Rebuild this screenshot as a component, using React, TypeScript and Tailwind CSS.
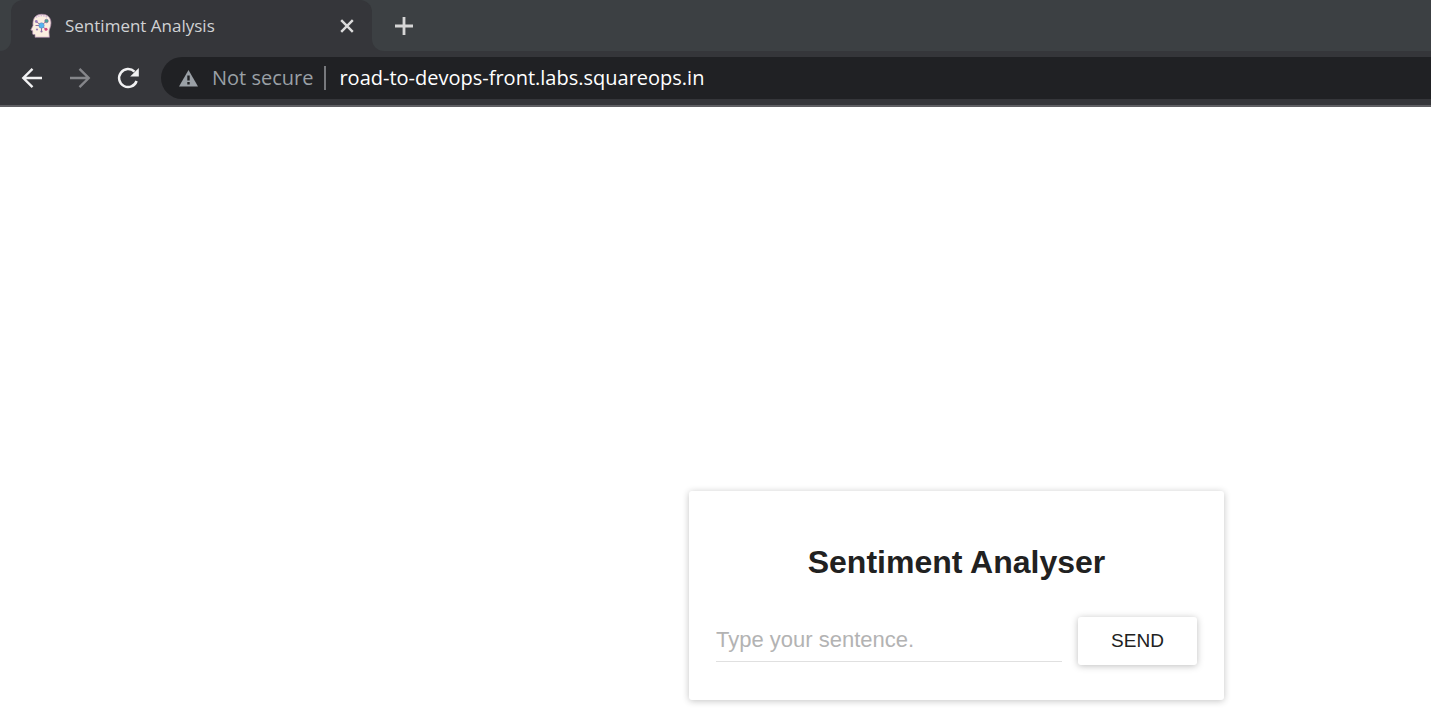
import type { ReactNode } from "react";

function HeadIcon() {
  return (
    <svg width="24" height="26" viewBox="0 0 24 26" aria-hidden="true" className="shrink-0">
      <path
        d="M6 24.3V21.500H4.500C3.800 21.500 3.600 21 3.600 20.500v-2.700l-1.800-.8 2.200-4.500C3.400 6 6 1.800 12 1.300 18.500 1 22 4.500 22 10c0 4-2 6-2 9l.4 5.300z"
        fill="#fbefe0"
        stroke="#a884a8"
        strokeWidth="0.700"
      />
      <path d="M7 4.500C10 2.200 15.500 1.800 18.500 4.600" fill="none" stroke="#d3b5d8" strokeWidth="1.400" strokeDasharray="1.500 1" />
      <g stroke="#855f92" strokeWidth="0.900">
        <path d="M12.500 12.500L7 8.500M12.500 12.500l5-4.500M12.500 12.500H6.500M12.500 12.500l4.500 4M12.500 12.500V19" />
      </g>
      <circle cx="12.500" cy="12.500" r="2.700" fill="#55b5f0" stroke="#6d7fb0" strokeWidth="0.500" />
      <circle cx="7.300" cy="8.500" r="1.400" fill="#9a7cba" />
      <circle cx="17.500" cy="8" r="1.800" fill="#3fa79a" stroke="#855f92" strokeWidth="0.600" />
      <circle cx="8" cy="16.500" r="1.100" fill="#9a7cba" />
      <circle cx="17" cy="16.300" r="1.500" fill="#d3477f" />
      <circle cx="12.500" cy="18.500" r="1.100" fill="#8b72a8" />
    </svg>
  );
}

function NavButton({ label, color, children }: { label: string; color: string; children: ReactNode }) {
  return (
    <button type="button" aria-label={label} className={`flex size-6 shrink-0 items-center justify-center ${color}`}>
      <svg width="24" height="24" viewBox="0 0 24 24" fill="none" stroke="currentColor" strokeWidth="2.400" aria-hidden="true">
        {children}
      </svg>
    </button>
  );
}

function TabStrip() {
  return (
    <div className="flex h-[51px] bg-[#35363a]">
      <div className="w-[11px] shrink-0 rounded-br-xl bg-[#3c4043]" />
      <div className="w-[361px] shrink-0 bg-[#3c4043]">
        <div className="flex h-full items-center rounded-t-xl bg-[#35363a] pr-[13px] pl-[18px]">
          <HeadIcon />
          <span className="ml-3 grow text-[17px] leading-6 whitespace-nowrap text-[#d0d2d4]">Sentiment Analysis</span>
          <button type="button" aria-label="Close tab" className="flex size-6 items-center justify-center text-[#dcdcdc]">
            <svg width="14" height="14" viewBox="0 0 14 14" stroke="currentColor" strokeWidth="2.400" aria-hidden="true">
              <path d="M1.200 1.200l11.600 11.600M12.800 1.200L1.200 12.800" />
            </svg>
          </button>
        </div>
      </div>
      <div className="flex grow items-center rounded-bl-xl bg-[#3c4043] pl-5">
        <button type="button" aria-label="New tab" className="flex size-6 items-center justify-center text-[#d6d6d6]">
          <svg width="20" height="20" viewBox="0 0 20 20" stroke="currentColor" strokeWidth="2.800" aria-hidden="true">
            <path d="M1 10h18M10 1v18" />
          </svg>
        </button>
      </div>
    </div>
  );
}

function Toolbar() {
  return (
    <div className="flex h-14 items-center border-b-2 border-[#5f5f63] bg-[#35363a] pl-5">
      <div className="flex gap-6">
        <NavButton label="Back" color="text-[#f1f1f2]">
          <path d="M22 12H3.500M12.500 2.800L3.300 12l9.200 9.200" />
        </NavButton>
        <NavButton label="Forward" color="text-[#85868a]">
          <path d="M2 12h18.500M11.500 2.800l9.200 9.200-9.200 9.200" />
        </NavButton>
        <NavButton label="Reload" color="text-[#f1f1f2]">
          <path d="M20.600 15A9 9 0 1 1 18.500 5.700" strokeWidth="2.500" />
          <path d="M22.800 2v8.600h-8.600z" fill="currentColor" stroke="none" />
        </NavButton>
      </div>
      <div className="ml-[21px] flex h-[42px] min-w-0 grow items-center rounded-l-full bg-[#202124] pl-[18px] text-xl leading-7">
        <svg width="19" height="18" viewBox="0 0 19 18" aria-hidden="true" className="shrink-0">
          <path d="M9.500 1L19 17.500H0z" fill="#9aa0a6" />
          <path d="M8.300 6.500h2.400v5H8.300zM8.300 13h2.400v2.400H8.300z" fill="#202124" />
        </svg>
        <span className="ml-3.5 shrink-0 whitespace-nowrap text-[#9aa0a6]">Not secure</span>
        <span className="ml-[11px] h-6 w-0.5 shrink-0 bg-[#77797d]" />
        <input
          aria-label="Address"
          type="text"
          defaultValue="road-to-devops-front.labs.squareops.in"
          className="ml-[13px] min-w-0 grow bg-transparent text-white outline-none"
        />
      </div>
    </div>
  );
}

export default function App() {
  return (
    <div className="min-h-screen bg-white">
      <header className="font-['Open_Sans',sans-serif]">
        <TabStrip />
        <Toolbar />
      </header>
      <main className="flex justify-end pt-96 pr-[207px] pb-3.5 font-['Liberation_Sans',sans-serif]">
        <section className="w-full max-w-[535px] rounded-[3px] px-[27px] pt-[51px] pb-[35px] shadow-[0_1px_7px_rgba(0,0,0,0.24)]">
          <h1 className="text-center text-[32px] leading-10 font-bold text-[#212121]">Sentiment Analyser</h1>
          <form className="mt-[35px] flex items-start gap-4" onSubmit={(event) => event.preventDefault()}>
            <input
              type="text"
              aria-label="Sentence"
              placeholder="Type your sentence."
              className="h-[45px] min-w-0 grow border-b border-[#e0e0e0] pt-0.5 text-[22px] text-[#212121] outline-none placeholder:text-[#b3b3b3]"
            />
            <button
              type="submit"
              className="h-12 w-[119px] shrink-0 rounded-[3px] bg-white text-[19px] text-[#212121] shadow-[0_1px_7px_rgba(0,0,0,0.26)]"
            >
              SEND
            </button>
          </form>
        </section>
      </main>
    </div>
  );
}
